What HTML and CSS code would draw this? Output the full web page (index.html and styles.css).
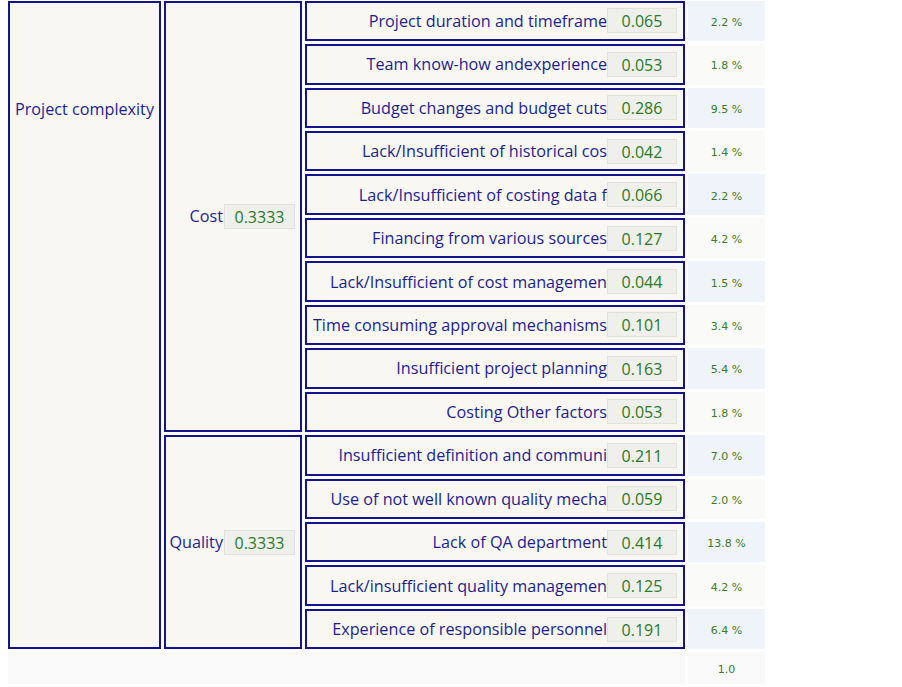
FILE: index.html
```html
<!DOCTYPE html>
<html>
<head>
<meta charset="utf-8">
<link rel="stylesheet" href="styles.css">
</head>
<body>
<table class="grid">
  <tr>
    <td class="c1" rowspan="15"><div class="c1-label">Project complexity</div></td>
    <td class="c2" rowspan="10"><div class="grp">Cost <span class="val gval">0.3333</span></div></td>
    <td class="c3"><div class="item"><span class="lbl">Project duration and timeframe</span><span class="val">0.065</span></div></td>
    <td class="pct odd">2.2 %</td>
  </tr>
  <tr>
    <td class="c3"><div class="item"><span class="lbl">Team know-how andexperience</span><span class="val">0.053</span></div></td>
    <td class="pct even">1.8 %</td>
  </tr>
  <tr>
    <td class="c3"><div class="item"><span class="lbl">Budget changes and budget cuts</span><span class="val">0.286</span></div></td>
    <td class="pct odd">9.5 %</td>
  </tr>
  <tr>
    <td class="c3"><div class="item"><span class="lbl">Lack/Insufficient of historical cos</span><span class="val">0.042</span></div></td>
    <td class="pct even">1.4 %</td>
  </tr>
  <tr>
    <td class="c3"><div class="item"><span class="lbl">Lack/Insufficient of costing data f</span><span class="val">0.066</span></div></td>
    <td class="pct odd">2.2 %</td>
  </tr>
  <tr>
    <td class="c3"><div class="item"><span class="lbl">Financing from various sources</span><span class="val">0.127</span></div></td>
    <td class="pct even">4.2 %</td>
  </tr>
  <tr>
    <td class="c3"><div class="item"><span class="lbl">Lack/Insufficient of cost managemen</span><span class="val">0.044</span></div></td>
    <td class="pct odd">1.5 %</td>
  </tr>
  <tr>
    <td class="c3"><div class="item"><span class="lbl">Time consuming approval mechanisms</span><span class="val">0.101</span></div></td>
    <td class="pct even">3.4 %</td>
  </tr>
  <tr>
    <td class="c3"><div class="item"><span class="lbl">Insufficient project planning</span><span class="val">0.163</span></div></td>
    <td class="pct odd">5.4 %</td>
  </tr>
  <tr>
    <td class="c3"><div class="item"><span class="lbl">Costing Other factors</span><span class="val">0.053</span></div></td>
    <td class="pct even">1.8 %</td>
  </tr>
  <tr>
    <td class="c2" rowspan="5"><div class="grp">Quality <span class="val gval">0.3333</span></div></td>
    <td class="c3"><div class="item"><span class="lbl">Insufficient definition and communi</span><span class="val">0.211</span></div></td>
    <td class="pct odd">7.0 %</td>
  </tr>
  <tr>
    <td class="c3"><div class="item"><span class="lbl">Use of not well known quality mecha</span><span class="val">0.059</span></div></td>
    <td class="pct even">2.0 %</td>
  </tr>
  <tr>
    <td class="c3"><div class="item"><span class="lbl">Lack of QA department</span><span class="val">0.414</span></div></td>
    <td class="pct odd">13.8 %</td>
  </tr>
  <tr>
    <td class="c3"><div class="item"><span class="lbl">Lack/insufficient quality managemen</span><span class="val">0.125</span></div></td>
    <td class="pct even">4.2 %</td>
  </tr>
  <tr>
    <td class="c3"><div class="item"><span class="lbl">Experience of responsible personnel</span><span class="val">0.191</span></div></td>
    <td class="pct odd">6.4 %</td>
  </tr>
  <tr class="total">
    <td class="blank" colspan="3"></td>
    <td class="pct tot">1.0</td>
  </tr>
</table>
</body>
</html>
```

FILE: styles.css
```css
html, body {
  background: #ffffff;
}
body {
  margin: 0 0 0 5px;
  font-family: "Open Sans", "Noto Sans", sans-serif;
  color: #1e1e90;
}
.grid {
  border-collapse: separate;
  border-spacing: 3px;
  margin-top: -2.3px;
}
.grid td {
  padding: 0;
}
.c1, .c2, .c3 {
  background: #f8f7f1;
  border: 2px solid #14148e;
}
.c1 {
  width: 149px;
  vertical-align: top;
}
.c1-label {
  text-align: center;
  font-size: 16.2px;
  line-height: 22px;
  padding-top: 95px;
  white-space: nowrap;
}
.c2 {
  width: 134px;
  vertical-align: middle;
}
.grp {
  display: flex;
  justify-content: flex-end;
  align-items: center;
  gap: 1px;
  padding-right: 5px;
  font-size: 16.2px;
}
.c3 {
  width: 376px;
}
.item {
  height: 36.45px;
  display: flex;
  justify-content: flex-end;
  align-items: center;
  padding-right: 6px;
  font-size: 16.2px;
  white-space: nowrap;
}
.lbl {
  line-height: 20px;
}
.val {
  display: inline-block;
  box-sizing: border-box;
  width: 70px;
  height: 25px;
  line-height: 24px;
  text-align: center;
  background: #efefec;
  border: 1px solid #e1e1dc;
  color: #2b7a26;
  font-size: 16px;
}
.gval {
  width: 71px;
}
.grid td.pct {
  width: 77px;
  text-align: center;
  vertical-align: middle;
  padding-top: 3px;
  box-sizing: border-box;
  font-family: "DejaVu Sans", sans-serif;
  font-size: 11px;
  color: #3c7a2a;
}
.pct.odd {
  background: #eff4fa;
}
.pct.even {
  background: #fafaf8;
}
.total td {
  height: 32px;
}
.blank {
  background: #f9f9f9;
}
.pct.tot {
  background: #f9f9f9;
}
```
